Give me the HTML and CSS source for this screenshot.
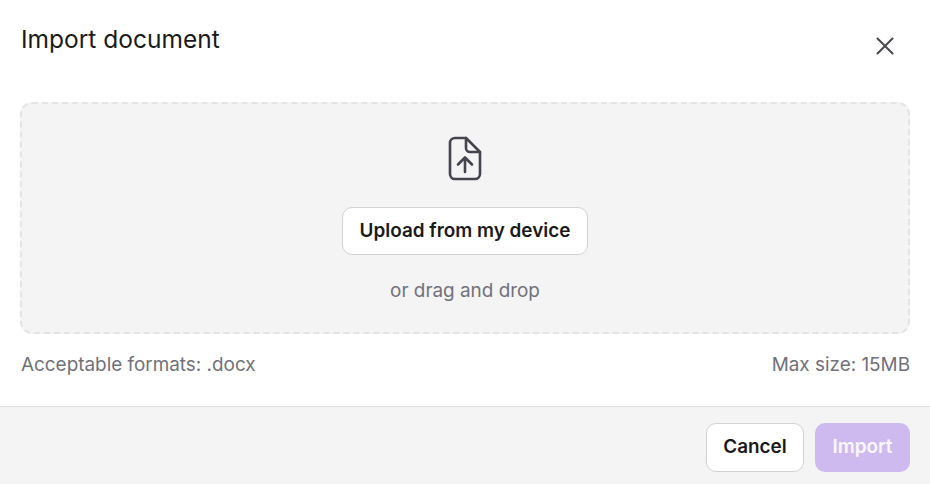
FILE: index.html
```html
<!DOCTYPE html>
<html lang="en">
<head>
<meta charset="utf-8">
<title>Import document</title>
<link rel="stylesheet" href="styles.css">
</head>
<body>
<div class="dialog">
  <header class="head">
    <h1 class="title">Import document</h1>
    <button class="close" aria-label="Close">
      <svg width="24" height="24" viewBox="0 0 24 24" fill="none" stroke="#4a4a55" stroke-width="2.1" stroke-linecap="round"><path d="M4.500 4.500 19.500 19.500M19.500 4.500 4.500 19.500"/></svg>
    </button>
  </header>
  <main class="body">
    <section class="drop">
      <svg class="file" width="36" height="48" viewBox="0 0 36 48" fill="none" stroke="#44444f" stroke-width="2.6" stroke-linecap="round" stroke-linejoin="round"><path d="M19 3H8A5 5 0 0 0 3 8v31A5 5 0 0 0 8 44h20a5 5 0 0 0 5-5V17L19 3Z"/><path d="M19 3v10a4 4 0 0 0 4 4h10"/><path d="M18 37V23M11 29.500l7-7 7 7"/></svg>
      <button class="upload">Upload from my device</button>
      <p class="hint">or drag and drop</p>
    </section>
    <div class="meta"><span>Acceptable formats: .docx</span><span>Max size: 15MB</span></div>
  </main>
  <footer class="foot">
    <button class="cancel">Cancel</button>
    <button class="import">Import</button>
  </footer>
</div>
</body>
</html>
```
FILE: styles.css
```css
* { box-sizing: border-box; }
html, body { margin: 0; height: 100%; }
body { background: #fff; font-family: Inter, "Liberation Sans", sans-serif; color: #1a1a1a; overflow: hidden; -webkit-font-smoothing: antialiased; }
button { font-family: inherit; cursor: pointer; }
.dialog { width: 930px; height: 484px; display: flex; flex-direction: column; }
.head { height: 102px; padding: 24px 21px 0; display: flex; justify-content: space-between; align-items: flex-start; }
.title { margin: 0; font-size: 24.5px; line-height: 31px; font-weight: 400; color: #1a1a1a; }
.close { width: 24px; height: 24px; margin: 10px 12px 0 0; padding: 0; border: 0; background: none; display: flex; }
.body { padding: 0 20px; flex: 1; }
.drop { height: 232px; background: #f4f4f4; border: 2px dashed #e4e4e6; border-radius: 12px; display: flex; flex-direction: column; align-items: center; padding-top: 31px; }
.file { width: 36px; height: 48px; display: block; }
.upload { margin-top: 24px; width: 246px; height: 48px; background: #fff; border: 1px solid #d2d2d6; border-radius: 10px; font-size: 18.9px; font-weight: 600; color: #1a1a1a; padding: 0 0 2px; }
.hint { margin: 24px 0 0; font-size: 18.9px; line-height: 24px; color: #71717a; }
.meta { display: flex; justify-content: space-between; margin-top: 18px; padding-left: 1px; font-size: 18.9px; line-height: 26px; color: #71717a; }
.foot { height: 78px; background: #f4f4f4; border-top: 1px solid #e1e1e3; padding: 16px 20px 0 0; display: flex; justify-content: flex-end; align-items: flex-start; gap: 11px; }
.cancel { width: 98px; height: 49px; background: #fff; border: 1px solid #d2d2d6; border-radius: 10px; font-size: 18.9px; font-weight: 600; color: #1a1a1a; padding: 0 0 2px; }
.import { width: 95px; height: 49px; background: #cfbaf0; border: 0; border-radius: 10px; font-size: 18.9px; font-weight: 600; color: #faf8fe; padding: 0 0 2px; }
```
